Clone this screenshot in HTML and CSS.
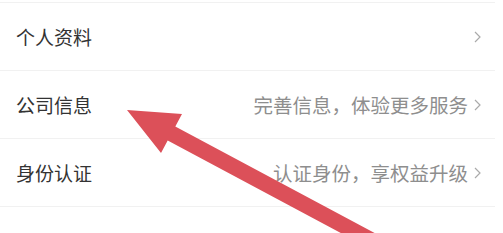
FILE: index.html
```html
<!DOCTYPE html>
<html lang="zh-CN">
<head>
    <meta charset="UTF-8">
    <title>我的资料</title>
    <link rel="stylesheet" href="styles.css">
</head>
<body>
    <div class="list">
        <div class="row">
            <span class="label">个人资料</span>
            <span class="extra">
                <svg class="chevron" width="7" height="12" viewBox="0 0 7 12"><polyline points="1,1 6,6 1,11" /></svg>
            </span>
        </div>
        <div class="row">
            <span class="label">公司信息</span>
            <span class="extra"><span class="hint">完善信息，体验更多服务</span><svg class="chevron" width="7" height="12" viewBox="0 0 7 12"><polyline points="1,1 6,6 1,11" /></svg></span>
        </div>
        <div class="row">
            <span class="label">身份认证</span>
            <span class="extra"><span class="hint">认证身份，享权益升级</span><svg class="chevron" width="7" height="12" viewBox="0 0 7 12"><polyline points="1,1 6,6 1,11" /></svg></span>
        </div>
        <div class="row"></div>
    </div>
    <!-- 红色箭头标注 -->
    <svg class="arrow" width="503" height="233" viewBox="0 0 503 233">
        <polygon points="127,110 182,114 175.3,126.5 437.3,266.5 429.7,280.5 167.7,140.5 161,153" />
    </svg>
</body>
</html>
```

FILE: styles.css
```css
body {
    margin: 0;
    font-family: "Noto Sans CJK SC", "Noto Sans", sans-serif;
    background-color: white;
    overflow: hidden;
    height: 233px;
}
.list {
    width: 495px;
    padding-top: 2px;
}
.row {
    display: flex;
    justify-content: space-between;
    align-items: center;
    height: 67px;
    padding: 0 14px 0 16px;
    border-top: 1px solid #f1f1f1;
}
.label {
    font-size: 19px;
    color: #333;
}
.extra {
    display: flex;
    align-items: center;
    gap: 6px;
}
.hint {
    font-size: 19.5px;
    color: #8e8e8e;
    white-space: nowrap;
}
.chevron {
    flex-shrink: 0;
}
.chevron polyline {
    fill: none;
    stroke: #aaa;
    stroke-width: 1.2;
}
.arrow {
    position: absolute;
    top: 0;
    left: 0;
    pointer-events: none;
}
.arrow polygon {
    fill: #dc5059;
}
```
